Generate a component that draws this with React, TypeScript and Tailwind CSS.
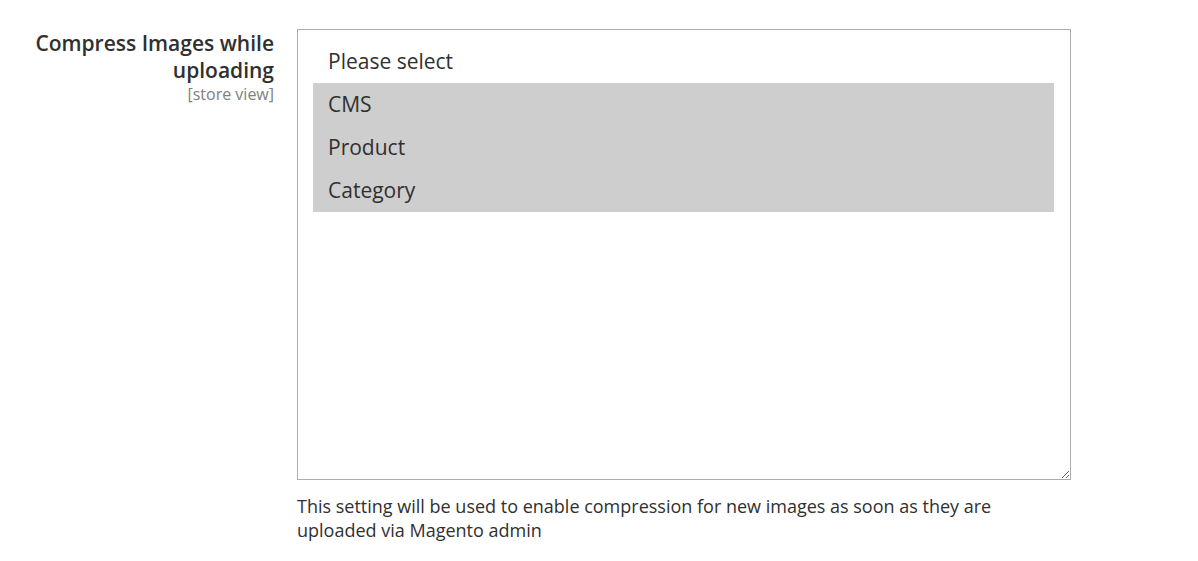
export default function App() {
  const options = [
    { label: "Please select", selected: false },
    { label: "CMS", selected: true },
    { label: "Product", selected: true },
    { label: "Category", selected: true },
  ];

  return (
    <div className="min-h-screen bg-white font-['Open_Sans',sans-serif] text-[#303030]">
      <div className="flex pt-[29px]">
        <div className="w-[274px] shrink-0 pl-[20px] pt-[1px] text-right">
          <div className="text-[21px] font-semibold leading-[27px]">Compress Images while uploading</div>
          <div className="text-[16px] leading-[20px] text-[#808080]">[store view]</div>
        </div>
        <div className="ml-[23px] w-[774px]">
          <div className="h-[451px] w-[774px] resize overflow-auto border border-[#adadad] px-[15px] pt-[10px] pr-[16px]">
            {options.map((o) => (
              <div
                key={o.label}
                className={
                  "h-[43px] px-[15px] text-[21px] leading-[43px] " +
                  (o.selected ? "bg-[#cecece]" : "")
                }
              >
                {o.label}
              </div>
            ))}
          </div>
          <p className="mt-[14px] w-[720px] text-[18px] leading-[24px]">
            This setting will be used to enable compression for new images as soon as they are uploaded via Magento admin
          </p>
        </div>
      </div>
    </div>
  );
}
